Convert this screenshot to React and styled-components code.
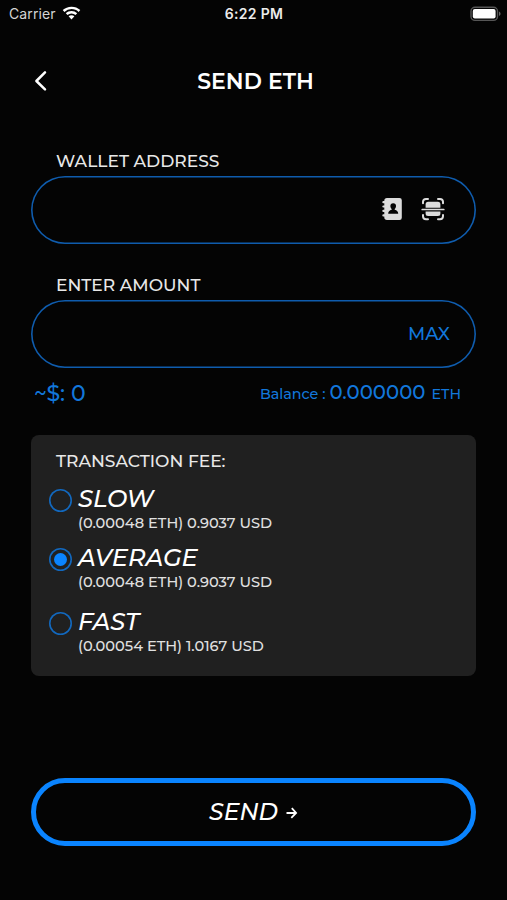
import React, { useState } from "react";
import styled, { createGlobalStyle } from "styled-components";

const Global = createGlobalStyle`
  * { box-sizing: border-box; }
  html, body { margin: 0; background: #040404; }
  body { font-family: Montserrat, Inter, sans-serif; font-weight: 500; color: #fff; }
  button { font: inherit; color: inherit; background: none; border: 0; padding: 0; }
`;

const Screen = styled.main`
  width: 507px;
  height: 900px;
  overflow: hidden;
  display: flex;
  flex-direction: column;
  background: #040404;
`;

const StatusBar = styled.header`
  height: 28px;
  padding: 0 6px 0 9px;
  display: grid;
  grid-template-columns: 1fr auto 1fr;
  align-items: center;
  font-family: Inter, sans-serif;
  font-size: 14px;
  font-weight: 400;
  line-height: 28px;
`;

const Carrier = styled.div`
  display: flex;
  align-items: center;
  gap: 6px;
  color: #d4d4d4;
  letter-spacing: 0.1px;

  svg {
    margin-top: -2px;
  }
`;

const Clock = styled.div`
  margin-left: -2px;
  font-weight: 600;
  color: #ececec;
  letter-spacing: 0.3px;
`;

const BatteryIcon = styled.svg`
  justify-self: end;
  margin-top: -1px;
`;

const TitleBar = styled.div`
  height: 40px;
  margin: 34px 29px 0 33px;
  display: grid;
  grid-template-columns: 40px 1fr 40px;
  align-items: center;
`;

const BackButton = styled.button`
  display: flex;
  margin: -2px 0 0 -2px;
`;

const Title = styled.h1`
  margin: 0;
  text-align: center;
  font-size: 22px;
  font-weight: 600;
  line-height: 40px;
`;

const Content = styled.div`
  margin: 0 31px;
  display: flex;
  flex-direction: column;
`;

const Label = styled.div`
  margin-top: ${(p) => p.$top}px;
  padding-left: 25px;
  height: 24px;
  line-height: 24px;
  font-size: 17.1px;
  color: #e8e8e8;
`;

const Field = styled.div`
  height: 68px;
  margin-top: ${(p) => p.$top}px;
  padding: 0 ${(p) => p.$right}px;
  display: flex;
  align-items: center;
  justify-content: flex-end;
  gap: 18px;
  box-shadow: inset 0 0 0 1.6px #0f5cad;
  border-radius: 34px;
`;

const IconButton = styled.button`
  display: flex;
  margin-top: -2px;
`;

const MaxButton = styled.button`
  font-size: 18px;
  line-height: 24px;
  color: #1277db;
`;

const Amounts = styled.div`
  height: 30px;
  margin-top: 11px;
  padding: 0 15px 0 3px;
  display: flex;
  justify-content: space-between;
  line-height: 30px;
  color: #1277db;
`;

const Fiat = styled.div`
  font-size: 22px;
`;

const Balance = styled.div`
  margin-top: -2px;
  display: flex;
  align-items: baseline;
  font-size: 14.3px;
`;

const BalanceValue = styled.span`
  font-size: 19.7px;
  margin: 0 6px 0 4px;
`;

const FeeCard = styled.section`
  height: 241px;
  margin-top: 26px;
  padding: 14px 0 0 18px;
  border-radius: 8px;
  background: #202020;
`;

const FeeTitle = styled.div`
  height: 24px;
  padding-left: 7px;
  line-height: 24px;
  font-size: 17.1px;
  color: #e8e8e8;
`;

const FeeOption = styled.div`
  height: 43px;
  margin-top: ${(p) => p.$top}px;
  display: flex;
  gap: 6px;
`;

const Radio = styled.button`
  width: 23px;
  height: 23px;
  margin-top: 3px;
  flex: none;
  display: grid;
  place-items: center;
  border-radius: 50%;

  && {
    box-shadow: inset 0 0 0 1.6px #1268be;
  }
`;

const Dot = styled.span`
  width: 13px;
  height: 13px;
  border-radius: 50%;
  background: #0a84ff;
`;

const OptionName = styled.div`
  height: 27px;
  line-height: 26px;
  font-size: 24.2px;
  font-style: italic;
`;

const OptionCost = styled.div`
  height: 20px;
  line-height: 20px;
  font-size: 14.6px;
  color: #e0e0e0;
`;

const SendButton = styled.button`
  && {
    height: 68px;
    margin: 102px 0 0;
    display: flex;
    align-items: center;
    justify-content: center;
    border: 5px solid #0a84ff;
    border-radius: 34px;
    font-size: 23.5px;
    font-style: italic;
    line-height: 30px;
  }

  svg {
    margin: 2px 0 0 8px;
  }
`;

const Wifi = () => (
  <svg width="19" height="15" viewBox="0 0 19 15" fill="#fff">
    <path d="M9.5.7C6.1.7 3 2 .7 4.1l1.7 1.8A10.4 10.4 0 0 1 9.5 3.1c2.7 0 5.2 1 7.1 2.8l1.7-1.8A12.9 12.9 0 0 0 9.5.7Z" />
    <path d="M9.5 5c-2.2 0-4.2.8-5.7 2.2l1.7 1.8a5.8 5.8 0 0 1 8 0l1.7-1.8A8.3 8.3 0 0 0 9.5 5Z" />
    <path d="M9.5 9.200c-1.100 0-2.100.4-2.900 1.100l2.900 3.300 2.900-3.300c-.8-.7-1.800-1.100-2.900-1.100Z" />
  </svg>
);

const Battery = () => (
  <BatteryIcon width="31" height="16" viewBox="0 0 31 16">
    <rect x="1" y="1.2" width="26.5" height="13.2" rx="4" fill="none" stroke="#565656" strokeWidth="1.4" />
    <rect x="2.8" y="3" width="22.8" height="9.6" rx="2" fill="#fff" />
    <path d="M29 5.5c1 .5 1.500 1.300 1.500 2.300S30 9.600 29 10.100Z" fill="#666" />
  </BatteryIcon>
);

const Chevron = () => (
  <svg width="18" height="24" viewBox="0 0 18 24" fill="none" stroke="#fff" strokeWidth="2.5" strokeLinecap="round" strokeLinejoin="round">
    <path d="M14 3.300 5.400 12l8.600 8.300" />
  </svg>
);

const Contacts = () => (
  <svg width="21" height="24" viewBox="0 0 21 24">
    <path d="M5 1h12.500a2.300 2.300 0 0 1 2.300 2.300v17.400a2.300 2.300 0 0 1-2.300 2.300H5a2.700 2.700 0 0 1-2.700-2.700V19.500H1.400a1 1 0 0 1 0-2.200h.9v-2.300h-.9a1 1 0 0 1 0-2.200h.9v-2.200h-.9a1 1 0 0 1 0-2.200h.9V6.300h-.9a1 1 0 0 1 0-2.200h.9v-.4A2.700 2.700 0 0 1 5 1Z" fill="#dcdcdc" />
    <path d="M11.200 6.200a2.800 2.800 0 0 1 2.800 2.900c0 1.300-.6 2.400-1.300 2.900v.8c2.300.6 3.500 1.900 3.500 4H6.200c0-2.100 1.200-3.400 3.500-4v-.8C9 11.500 8.400 10.400 8.400 9.100a2.800 2.800 0 0 1 2.800-2.900Z" fill="#040404" />
  </svg>
);

const Scan = () => (
  <svg width="24" height="24" viewBox="0 0 24 24" fill="none" stroke="#dcdcdc" strokeWidth="2" strokeLinecap="round">
    <path d="M2 6.200V4.800A3 3 0 0 1 5 1.900H7M17 1.900h2A3 3 0 0 1 22 4.800V6.200M2 18v1.300a3 3 0 0 0 3 2.900H7M17 22.200h2a3 3 0 0 0 3-2.900V18" />
    <path d="M1.200 12.500h21.600" strokeWidth="1.700" />
    <path d="M4.600 10.700V7.300a2.500 2.500 0 0 1 2.500-2.500h9.800a2.500 2.500 0 0 1 2.500 2.500v3.400ZM4.600 14.400h14.800v2.100a2.500 2.500 0 0 1-2.500 2.500H7.100a2.500 2.500 0 0 1-2.500-2.500Z" fill="#dcdcdc" stroke="none" />
  </svg>
);

const Arrow = () => (
  <svg width="12" height="14" viewBox="0 0 12 14" fill="none" stroke="#fff" strokeWidth="1.8">
    <path d="M.5 7h9.700M5.800 2.200l4.300 4.800-4.800 4.800" />
  </svg>
);

const fees = [
  { name: "SLOW", cost: "(0.00048 ETH) 0.9037 USD", top: 13 },
  { name: "AVERAGE", cost: "(0.00048 ETH) 0.9037 USD", top: 16 },
  { name: "FAST", cost: "(0.00054 ETH) 1.0167 USD", top: 21 },
];

export default function App() {
  const [fee, setFee] = useState("AVERAGE");
  return (
    <>
      <Global />
      <Screen>
        <StatusBar>
          <Carrier>Carrier <Wifi /></Carrier>
          <Clock>6:22 PM</Clock>
          <Battery />
        </StatusBar>
        <TitleBar>
          <BackButton aria-label="Back"><Chevron /></BackButton>
          <Title>SEND ETH</Title>
        </TitleBar>
        <Content>
          <Label $top={47}>WALLET ADDRESS</Label>
          <Field $top={3} $right={31}>
            <IconButton aria-label="Contacts"><Contacts /></IconButton>
            <IconButton aria-label="Scan"><Scan /></IconButton>
          </Field>
          <Label $top={29}>ENTER AMOUNT</Label>
          <Field $top={3} $right={26}>
            <MaxButton>MAX</MaxButton>
          </Field>
          <Amounts>
            <Fiat>~$: 0</Fiat>
            <Balance>
              <span>Balance :</span>
              <BalanceValue>0.000000</BalanceValue>
              <span>ETH</span>
            </Balance>
          </Amounts>
          <FeeCard>
            <FeeTitle>TRANSACTION FEE:</FeeTitle>
            {fees.map((f) => (
              <FeeOption key={f.name} $top={f.top}>
                <Radio aria-label={f.name} onClick={() => setFee(f.name)}>
                  {fee === f.name && <Dot />}
                </Radio>
                <div>
                  <OptionName>{f.name}</OptionName>
                  <OptionCost>{f.cost}</OptionCost>
                </div>
              </FeeOption>
            ))}
          </FeeCard>
          <SendButton><span>SEND</span><Arrow /></SendButton>
        </Content>
      </Screen>
    </>
  );
}
